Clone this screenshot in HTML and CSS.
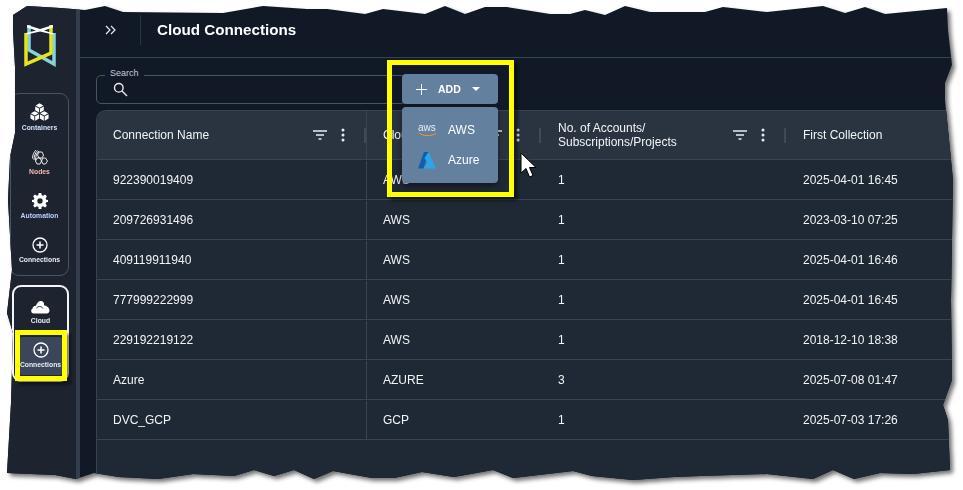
FILE: index.html
```html
<!DOCTYPE html>
<html lang="en">
<head>
    <meta charset="UTF-8">
    <title>Cloud Connections</title>
    <link rel="stylesheet" href="styles.css">
</head>
<body>
    <div class="sheet">
        <div class="torn">
            <aside class="sidebar">
                <svg class="logo" width="32" height="44" viewBox="0 0 32 44">
                    <path d="M5 2 L5 27 L30 41 L30 10" fill="none" stroke="#86d3d8" stroke-width="3.5"/>
                    <path d="M2 10 L2 41 L27 30 L27 2" fill="none" stroke="#e4e51e" stroke-width="3.5"/>
                    <path d="M3 2 L16 6 L29 2 L29 4.500 L20 7.500 L30 10.500 L29 11.500 L16 8.500 L3 11.500 L2 10 L12 7.500 L3 4.500Z" fill="#fff"/>
                </svg>
                <div class="nav-group">
                    <div class="nav-item nav-item-first">
                        <svg width="19" height="18" viewBox="0 0 22 20" fill="#fff">
                            <path d="M11 0 L15.500 2.500 L11 5 L6.500 2.500Z M6 3.500 L10.500 6 L10.500 10.500 L6 8Z M16 3.500 L11.500 6 L11.500 10.500 L16 8Z"/>
                            <path d="M5.500 9 L10 11.500 L5.500 14 L1 11.500Z M.5 12.500 L5 15 L5 20 L.5 17.500Z M10.500 12.500 L6 15 L6 20 L10.500 17.500Z"/>
                            <path d="M16.500 9 L21 11.500 L16.500 14 L12 11.500Z M11.500 12.500 L16 15 L16 20 L11.500 17.500Z M21.500 12.500 L17 15 L17 20 L21.500 17.500Z"/>
                        </svg>
                        <span class="nav-label label-containers">Containers</span>
                    </div>
                    <div class="nav-item">
                        <svg width="16" height="16" viewBox="0 0 16 16" fill="none" stroke="#fff" stroke-width=".9">
                            <path d="M.5 9.500 C.5 6 2 3 4 1 M2 11 C2 7 3.500 3.500 5.500 1.500 M3.500 11.500 C3.500 7.500 4.500 4 7 2"/>
                            <path d="M7 3 H10 L11.500 6 L10 9 H7 L5.500 6Z"/>
                            <path d="M5 9 H8 L9.500 12 L8 15 H5 L3.500 12Z"/>
                            <path d="M11 9 H13.500 L15.500 12 L13.500 15 H11 L9.500 12Z"/>
                        </svg>
                        <span class="nav-label label-nodes">Nodes</span>
                    </div>
                    <div class="nav-item">
                        <svg width="16" height="16" viewBox="0 0 24 24" fill="#fff">
                            <path fill-rule="evenodd" d="M10 0 H14 L14.600 3.300 L16.800 4.200 L19.600 2.300 L22.300 5 L20.400 7.800 L21.300 10 L24 10.500 V13.500 L21.300 14 L20.400 16.200 L22.300 19 L19.600 21.700 L16.800 19.800 L14.600 20.700 L14 24 H10 L9.400 20.700 L7.200 19.800 L4.400 21.700 L1.700 19 L3.600 16.200 L2.700 14 L0 13.500 V10.500 L2.700 10 L3.600 7.800 L1.700 5 L4.400 2.300 L7.200 4.200 L9.400 3.300Z M12 8 A4 4 0 1 0 12 16 A4 4 0 1 0 12 8Z"/>
                        </svg>
                        <span class="nav-label label-auto">Automation</span>
                    </div>
                    <div class="nav-item">
                        <svg width="16" height="16" viewBox="0 0 16 16" fill="none" stroke="#fff">
                            <circle cx="8" cy="8" r="7" stroke-width="1.300"/>
                            <path d="M8 4.500 V11.500 M4.500 8 H11.500" stroke-width="1.500"/>
                        </svg>
                        <span class="nav-label">Connections</span>
                    </div>
                </div>
                <div class="nav-group nav-group-active">
                    <div class="nav-item nav-item-first">
                        <svg width="19" height="14" viewBox="0 0 19 14" fill="#fff">
                            <path d="M2.500 13.500 A2.500 2.500 0 0 1 1.500 8.800 C2 6 4 5.500 5 5.800 C6 2 8.500 .5 10.500 1 C12.500 1.500 13.500 3.500 13 5.500 C15 5 18.500 7.500 18.500 10.500 C18.500 12.500 17 13.500 16 13.500Z"/>
                            <path d="M5.500 8 C8 5.500 11 6.500 12 8.500" fill="none" stroke="#1d2430"/>
                        </svg>
                        <span class="nav-label">Cloud</span>
                    </div>
                    <div class="nav-item nav-item-current">
                        <svg width="16" height="16" viewBox="0 0 16 16" fill="none" stroke="#fff">
                            <circle cx="8" cy="8" r="7" stroke-width="1.300"/>
                            <path d="M8 4.500 V11.500 M4.500 8 H11.500" stroke-width="1.500"/>
                        </svg>
                        <span class="nav-label">Connections</span>
                    </div>
                </div>
                <div class="highlight highlight-nav"></div>
            </aside>
            <div class="strip"></div>
            <main class="content">
                <header class="topbar">
                    <svg class="expand" width="12" height="10" viewBox="0 0 12 10" fill="none" stroke="#e8ebef" stroke-width="1.200">
                        <path d="M1 1 L5 5 L1 9 M6 1 L10 5 L6 9"/>
                    </svg>
                    <h1 class="title">Cloud Connections</h1>
                </header>
                <div class="search">
                    <span class="search-label">Search</span>
                    <svg width="15" height="15" viewBox="0 0 15 15" fill="none" stroke="#e8ebef" stroke-width="1.400">
                        <circle cx="5.800" cy="5.800" r="4.300"/>
                        <path d="M9 9 L14 14"/>
                    </svg>
                </div>
                <section class="table">
                    <div class="row row-head">
                        <div class="cell cell-first">
                            <span class="head-name">Connection Name</span>
                            <svg class="filter" width="14" height="10" viewBox="0 0 14 10" stroke="#e8ebef" stroke-width="1.500"><path d="M0 1 H14 M3 5 H11 M5.500 9 H8.500"/></svg>
                            <svg class="dots" width="4" height="14" viewBox="0 0 4 14" fill="#e8ebef"><circle cx="2" cy="2" r="1.500"/><circle cx="2" cy="7" r="1.500"/><circle cx="2" cy="12" r="1.500"/></svg>
                            <i class="col-sep"></i>
                        </div>
                        <div class="cell">
                            <span class="head-name">Cloud Provider</span>
                            <svg class="filter" width="14" height="10" viewBox="0 0 14 10" stroke="#e8ebef" stroke-width="1.500"><path d="M0 1 H14 M3 5 H11 M5.500 9 H8.500"/></svg>
                            <svg class="dots" width="4" height="14" viewBox="0 0 4 14" fill="#e8ebef"><circle cx="2" cy="2" r="1.500"/><circle cx="2" cy="7" r="1.500"/><circle cx="2" cy="12" r="1.500"/></svg>
                            <i class="col-sep"></i>
                        </div>
                        <div class="cell">
                            <span class="head-name">No. of Accounts/<br>Subscriptions/Projects</span>
                            <svg class="filter" width="14" height="10" viewBox="0 0 14 10" stroke="#e8ebef" stroke-width="1.500"><path d="M0 1 H14 M3 5 H11 M5.500 9 H8.500"/></svg>
                            <svg class="dots" width="4" height="14" viewBox="0 0 4 14" fill="#e8ebef"><circle cx="2" cy="2" r="1.500"/><circle cx="2" cy="7" r="1.500"/><circle cx="2" cy="12" r="1.500"/></svg>
                            <i class="col-sep"></i>
                        </div>
                        <div class="cell">
                            <span class="head-name">First Collection</span>
                        </div>
                    </div>
                    <div class="row"><div class="cell cell-first">922390019409</div><div class="cell">AWS</div><div class="cell">1</div><div class="cell">2025-04-01 16:45</div></div>
                    <div class="row"><div class="cell cell-first">209726931496</div><div class="cell">AWS</div><div class="cell">1</div><div class="cell">2023-03-10 07:25</div></div>
                    <div class="row"><div class="cell cell-first">409119911940</div><div class="cell">AWS</div><div class="cell">1</div><div class="cell">2025-04-01 16:46</div></div>
                    <div class="row"><div class="cell cell-first">777999222999</div><div class="cell">AWS</div><div class="cell">1</div><div class="cell">2025-04-01 16:45</div></div>
                    <div class="row"><div class="cell cell-first">229192219122</div><div class="cell">AWS</div><div class="cell">1</div><div class="cell">2018-12-10 18:38</div></div>
                    <div class="row"><div class="cell cell-first">Azure</div><div class="cell">AZURE</div><div class="cell">3</div><div class="cell">2025-07-08 01:47</div></div>
                    <div class="row"><div class="cell cell-first">DVC_GCP</div><div class="cell">GCP</div><div class="cell">1</div><div class="cell">2025-07-03 17:26</div></div>
                </section>
            </main>
            <div class="add-menu">
                <button class="add-btn">
                    <svg width="11" height="11" viewBox="0 0 11 11" stroke="#fff"><path d="M5.500 0 V11 M0 5.500 H11"/></svg>
                    <span>ADD</span>
                    <svg width="8" height="4" viewBox="0 0 8 4" fill="#fff"><path d="M0 0 H8 L4 4Z"/></svg>
                </button>
                <div class="add-list">
                    <div class="add-item">
                        <span class="aws-logo">aws<svg width="19" height="5" viewBox="0 0 19 5" fill="none"><path d="M.5 .5 C5 4.500 13 4.500 18 1.500" stroke="#f09a24"/></svg></span>
                        <span>AWS</span>
                    </div>
                    <div class="add-item">
                        <svg class="azure-logo" width="18" height="17" viewBox="0 0 18 17">
                            <path d="M6 0 H11 L5.500 16.500 H0Z" fill="#0f5fae"/>
                            <path d="M10.500 0 L18 16.500 H5.500 L9.500 11 L6.500 6Z" fill="#2ea5e8"/>
                        </svg>
                        <span>Azure</span>
                    </div>
                </div>
            </div>
            <div class="highlight highlight-add"></div>
            <svg class="cursor" width="20" height="27" viewBox="0 0 20 27">
                <path d="M1 1 V21 L6 16.500 L9.500 25 L13 23.500 L9.500 15.500 H16Z" fill="#fff" stroke="#000"/>
            </svg>
        </div>
    </div>
</body>
</html>
```

FILE: styles.css
```css
:root {
    --sidebar: #1d2430;
    --strip: #333d4b;
    --main: #111927;
    --row: #1f2935;
    --head: #2a3440;
    --line: #3a4450;
    --text: #f2f4f6;
    --menu: #64809f;
}

* {
    box-sizing: border-box;
}

body {
    margin: 0;
    width: 963px;
    height: 490px;
    overflow: hidden;
    background: #fff;
    font-family: "Liberation Sans", Arial, sans-serif;
    color: var(--text);
    font-size: 12px;
}

.sheet {
    height: 490px;
    filter: drop-shadow(3px 3px 2px rgba(0, 0, 0, 0.55));
}

/* torn paper edge round the whole capture */
.torn {
    position: relative;
    display: flex;
    height: 490px;
    background: var(--main);
    clip-path: polygon(
        13px 15px, 27px 6px, 60px 8px, 85px 10px, 105px 6px, 123px 12px, 223px 13px, 263px 6px, 307px 9px, 327px 9px, 365px 14px, 383px 9px, 425px 14px, 445px 6px, 465px 14px, 485px 7px, 507px 7px, 550px 14px,
        570px 14px, 585px 10px, 605px 15px, 625px 6px, 650px 12px, 705px 12px, 723px 7px, 767px 12px, 823px 6px, 845px 13px, 865px 7px, 885px 14px, 947px 8px,
        948px 30px, 952px 65px, 945px 83px, 945px 100px, 950px 150px, 953px 180px, 951px 300px, 952px 380px, 943px 405px, 948px 420px, 950px 470px,
        913px 474px, 880px 473px, 854px 479px, 833px 470px, 813px 479px, 767px 474px, 700px 476px, 674px 477px, 633px 480px, 592px 476px, 573px 471px, 513px 478px, 493px 470px, 454px 477px, 422px 472px, 394px 478px, 372px 478px, 333px 471px, 314px 479px, 294px 470px, 274px 476px, 254px 470px, 234px 476px, 193px 474px, 158px 479px, 119px 477px, 94px 473px, 76px 479px, 55px 475px, 7px 473px,
        11px 403px, 13px 333px, 7px 313px, 12px 270px, 8px 200px, 10px 157px, 15px 133px, 15px 67px, 13px 30px
    );
}

.sidebar {
    position: relative;
    flex: 0 0 76px;
    display: flex;
    flex-direction: column;
    align-items: center;
    padding: 23px 7px 0 10px;
    background: var(--sidebar);
}

.logo {
    flex: none;
    margin-bottom: 26px;
}

.nav-group {
    flex: none;
    width: 59px;
    height: 183px;
    padding-bottom: 12px;
    border: 1px solid #4a5360;
    border-radius: 9px;
}

.nav-group-active {
    align-self: flex-end;
    width: 57px;
    height: 97px;
    margin-top: 9px;
    padding-bottom: 0;
    border: 2px solid #f4f5f7;
}

.nav-item {
    display: flex;
    flex-direction: column;
    align-items: center;
    justify-content: flex-end;
    height: 44px;
}

.nav-item-first {
    height: 38px;
}

.nav-item svg {
    flex: none;
}

.nav-item-current {
    width: 42px;
    height: 38px;
    margin: 12px auto 0;
    padding-bottom: 6px;
    background: #3b465a;
    border-radius: 2px;
}

.nav-label {
    margin-top: 3px;
    font-size: 6.800px;
    line-height: 8px;
    font-weight: bold;
    white-space: nowrap;
    color: #e6ebf4;
}

.label-containers {
    color: #cfe0ff;
}

.label-nodes {
    color: #f6b8b0;
}

.label-auto {
    color: #bcd0ff;
}

.strip {
    flex: 0 0 4px;
    background: var(--strip);
}

.content {
    flex: 1;
    display: flex;
    flex-direction: column;
    min-width: 0;
}

.topbar {
    flex: 0 0 58px;
    display: flex;
    align-items: center;
    padding: 2px 0 0 25px;
    border-bottom: 1px solid var(--line);
}

.expand {
    flex: none;
}

.title {
    height: 30px;
    margin: 0 0 0 23px;
    padding-left: 16px;
    border-left: 1px solid #2a3340;
    font-size: 15.200px;
    line-height: 30px;
    font-weight: bold;
    color: #fff;
}

.search {
    position: relative;
    display: flex;
    align-items: center;
    width: 310px;
    height: 29px;
    margin: 17px 0 6px 16px;
    padding-left: 16px;
    border: 1px solid #4a5360;
    border-radius: 5px;
}

.search-label {
    position: absolute;
    top: -8px;
    left: 8px;
    padding: 0 5px;
    background: var(--main);
    font-size: 9px;
    line-height: 11px;
    color: #c3ccd6;
}

.table {
    flex: 1;
    margin-left: 16px;
    background: var(--row);
    border-top-left-radius: 10px;
    border-top: 1px solid var(--line);
    border-left: 1px solid var(--line);
}

.row {
    display: grid;
    grid-template-columns: 270px 174px 245px 1fr;
    height: 40px;
    padding-top: 1px;
    border-bottom: 1px solid var(--line);
}

.row-head {
    height: 49px;
    padding-top: 0;
    background: var(--head);
    border-top-left-radius: 10px;
}

.cell {
    display: flex;
    align-items: center;
    padding-left: 17px;
    white-space: nowrap;
}

.cell-first {
    padding-left: 16px;
    border-right: 1px solid var(--line);
}

.cell-first + .cell {
    padding-left: 16px;
}

.head-name {
    flex: 1;
    line-height: 14px;
}

.filter {
    flex: none;
    margin-right: 14px;
}

.dots {
    flex: none;
    margin-right: 19px;
}

.col-sep {
    flex: none;
    width: 2px;
    height: 15px;
    background: #3f4a56;
}

.add-menu {
    position: absolute;
    top: 74px;
    left: 402px;
    width: 96px;
}

.add-btn {
    display: flex;
    align-items: center;
    width: 100%;
    height: 30px;
    padding: 0 0 0 14px;
    gap: 11px;
    border: 0;
    border-radius: 4px;
    background: var(--menu);
    font-family: "Liberation Sans", Arial, sans-serif;
    font-size: 10.500px;
    font-weight: bold;
    color: #fff;
}

.add-list {
    height: 76px;
    margin-top: 3px;
    padding-top: 8px;
    border-radius: 4px;
    background: var(--menu);
    box-shadow: 0 3px 6px rgba(0, 0, 0, 0.45);
}

.add-item {
    display: flex;
    align-items: center;
    height: 30px;
    padding-left: 16px;
    font-size: 12px;
    color: #fff;
}

.aws-logo {
    display: flex;
    flex-direction: column;
    width: 30px;
    font-size: 10px;
    line-height: 8px;
    color: #e8edf3;
}

.aws-logo svg {
    display: block;
}

.azure-logo {
    flex: none;
    margin-right: 12px;
}

.highlight {
    position: absolute;
    border: 5px solid #ffff00;
    box-shadow: 4px 4px 3px rgba(0, 0, 0, 0.45);
}

.highlight-add {
    top: 60px;
    left: 387px;
    width: 127px;
    height: 137px;
}

.highlight-nav {
    top: 330px;
    left: 15px;
    width: 52px;
    height: 51px;
}

.cursor {
    position: absolute;
    top: 152px;
    left: 520px;
}
```
